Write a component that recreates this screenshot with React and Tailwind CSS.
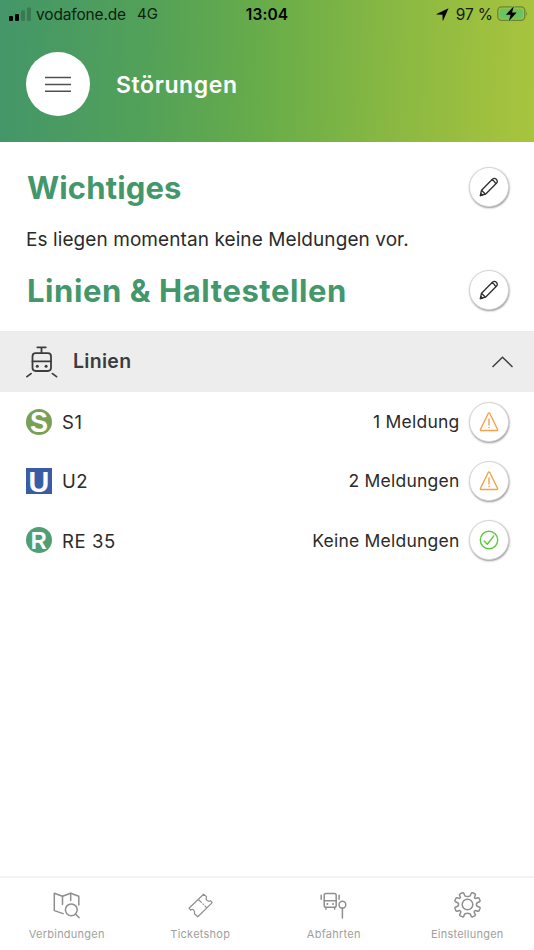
import clsx from 'clsx';

const lines = [
  { id: 's1', name: 'S1', badge: 'S', status: '1 Meldung', ok: false },
  { id: 'u2', name: 'U2', badge: 'U', status: '2 Meldungen', ok: false },
  { id: 're35', name: 'RE 35', badge: 'R', status: 'Keine Meldungen', ok: true },
];

function StatusBar() {
  return (
    <div className="flex h-7 items-center pl-[9px] pr-[6px] text-base text-[#10200f]">
      <div className="flex flex-1 items-center">
        <svg width="23" height="14" viewBox="0 0 23 14">
          <rect x="0" y="9" width="4" height="5" rx="1" fill="#000" />
          <rect x="6" y="7" width="4" height="7" rx="1" fill="#000" />
          <rect x="12" y="3.5" width="4" height="10.5" rx="1" fill="#397b51" />
          <rect x="18" y="0.5" width="4" height="13.5" rx="1" fill="#397b51" />
        </svg>
        <span className="ml-1 pt-px text-[15.5px] tracking-[-0.15px]">vodafone.de</span>
        <span className="ml-[11px] pt-px text-[15px]">4G</span>
      </div>
      <span className="mr-[3px] pt-px text-[15.5px] font-semibold tracking-[0.15px] text-black">13:04</span>
      <div className="flex flex-1 items-center justify-end">
        <svg className="mr-[7px]" width="13" height="13" viewBox="0 0 12 12">
          <path d="M11.6 0.3 L6.6 11.6 Q6.2 11.9 6.1 11.3 L6 6.3 L0.6 6.1 Q0 5.9 0.5 5.5 Z" fill="#000" />
        </svg>
        <span className="pt-px text-[15.5px] tracking-[-0.1px]">97 %</span>
        <svg className="ml-1" width="31" height="17" viewBox="0 0 31 17">
          <rect x="0.8" y="0.9" width="27" height="13.4" rx="3.8" fill="none" stroke="#6b8632" strokeWidth="1.3" />
          <rect x="2.8" y="2.8" width="23" height="9.6" rx="2" fill="#65c566" />
          <path d="M29.3 5.2 Q31 7.5 29.3 10 Z" fill="#6b8632" />
          <path
            d="M16.8 0.2 L8.9 8.7 H13.6 L11.8 15.2 L19.6 6.5 H15 Z"
            fill="#000"
            stroke="#7dbb50"
            strokeWidth="2"
            paintOrder="stroke"
            strokeLinejoin="round"
          />
        </svg>
      </div>
    </div>
  );
}

function RoundButton({ label, children }) {
  return (
    <button
      aria-label={label}
      className="flex size-10 shrink-0 items-center justify-center rounded-full border border-[#d6d6d6] bg-white shadow-[0.5px_1px_2px_rgba(0,0,0,0.42)]"
    >
      {children}
    </button>
  );
}

function PencilIcon() {
  return (
    <svg width="20" height="20" viewBox="0 0 20 20" fill="none" stroke="#2e2e2e" strokeWidth="1.3" strokeLinejoin="round">
      <path d="M1.4 18.5 L2.5 13.2 L13.4 2.2 Q15.3 0.4 17.3 2.3 Q19.2 4.4 17.4 6.3 L6.5 17.2 Z" />
      <path d="M2.5 13.2 L6.5 17.2 M12.8 2.8 Q15 3 16.8 6.8" />
      <path d="M1.4 18.5 L2 16.6 L3.4 18 Z" fill="#2e2e2e" />
    </svg>
  );
}

function WarningIcon() {
  return (
    <svg width="20" height="20" viewBox="0 0 20 20" fill="none" stroke="#f3a24b" strokeWidth="1.4" strokeLinejoin="round">
      <path d="M9.2 1.5 Q10 0.5 10.8 1.5 L18.6 17.5 Q18.8 18.5 17.8 18.5 H2.2 Q1.2 18.5 1.4 17.5 Z" />
      <path d="M10 7 V13" strokeLinecap="round" />
      <circle cx="10" cy="15.5" r="0.8" fill="#f3a24b" stroke="none" />
    </svg>
  );
}

function CheckIcon() {
  return (
    <svg width="20" height="20" viewBox="0 0 20 20" fill="none" stroke="#5bcb3f" strokeWidth="1.4">
      <circle cx="10" cy="10" r="8.7" />
      <path d="M5.1 11 L8.3 14.2 L14.8 5.9" strokeLinecap="round" strokeLinejoin="round" />
    </svg>
  );
}

function TramIcon() {
  return (
    <svg width="32" height="32" viewBox="0 0 32 32" fill="none" stroke="#3c3c3c" strokeWidth="1.8" strokeLinecap="round">
      <path d="M11.3 1.3 H19.8 M15.5 1.3 V7" />
      <rect x="6.5" y="7.2" width="18.5" height="17.8" rx="3.2" />
      <path d="M6.5 15.4 H25 M5 27.6 L1 30.6 M26.5 27.6 L30.5 30.6" />
      <circle cx="11.3" cy="20.2" r="1.5" fill="#3c3c3c" stroke="none" />
      <circle cx="20.1" cy="20.2" r="1.5" fill="#3c3c3c" stroke="none" />
    </svg>
  );
}

function LineBadge({ type }) {
  return (
    <svg
      width="26"
      height="26"
      viewBox="0 0 26 26"
      className="shrink-0 overflow-visible font-['Liberation_Sans',sans-serif] font-bold"
      fill="#fff"
    >
      {type === 'S' && (
        <>
          <circle cx="13" cy="13" r="13" fill="#7a9f56" />
          <text x="4" y="23.2" fontSize="29.5" textLength="18" lengthAdjust="spacingAndGlyphs">S</text>
        </>
      )}
      {type === 'U' && (
        <>
          <rect width="26" height="26" fill="#395da5" />
          <text x="2.6" y="23.5" fontSize="30" textLength="20.8" lengthAdjust="spacingAndGlyphs">U</text>
        </>
      )}
      {type === 'R' && (
        <>
          <circle cx="13" cy="13" r="13" fill="#4f9e74" />
          <text x="4.8" y="21.6" fontSize="24.5" textLength="16" lengthAdjust="spacingAndGlyphs">R</text>
        </>
      )}
    </svg>
  );
}

function SectionTitle({ title, className }) {
  return (
    <div className="flex h-11 items-center justify-between pl-[27px] pr-[25px]">
      <h2 className={clsx('text-[31px] font-bold leading-none text-[#43976b]', className)}>{title}</h2>
      <RoundButton label={`${title} bearbeiten`}>
        <PencilIcon />
      </RoundButton>
    </div>
  );
}

function MapSearchIcon() {
  return (
    <>
      <path d="M10.2 22.6 L1.3 19.6 V2.2 L9.5 5.2 L17.7 2.2 L25.8 5.2 V14" />
      <path d="M9.5 5.2 V13.6 M17.7 2.2 V9.6" />
      <circle cx="18.3" cy="18.8" r="5.9" />
      <path d="M22.5 23 L26 26.6" />
    </>
  );
}

function TicketIcon() {
  return (
    <g strokeWidth="1.2">
      <path d="M16.6 3.2 L2 17.2 L3.7 19 Q5.3 17.8 6.7 19.2 Q8.1 20.7 7.4 22.7 L10.8 25.8 L25.2 11.6 L23.5 9.7 Q21.5 10.8 19.9 9.4 Q18.5 7.6 19.5 5.6 Z" />
      <path d="M11.8 9 L14.4 11.4 M15.8 12.8 L16.4 13.4 M17.8 14.8 L19.6 16.6" />
    </g>
  );
}

function BusStopIcon() {
  return (
    <>
      <rect x="4.2" y="2.6" width="12" height="13.6" rx="1.8" />
      <path d="M4.2 9.8 H16.2 M6 16.5 V18.2 M14.6 16.5 V18.2 M1.2 4.2 V8.2 M19.1 4.2 V8.2" />
      <circle cx="7.4" cy="13" r="1" fill="#8f8f8f" stroke="none" />
      <circle cx="13" cy="13" r="1" fill="#8f8f8f" stroke="none" />
      <circle cx="22.4" cy="13.7" r="3.4" />
      <path d="M22.4 17.2 V27" />
    </>
  );
}

function GearIcon() {
  return (
    <>
      <path d="M10.8 4.8 L9.8 2.3 Q9.5 1.5 8.6 1.8 L6.1 2.9 Q5.2 3.3 5.6 4.2 L6.4 6.4 Q6.2 7.4 5.1 7.4 L3.1 6.7 Q2.3 6.5 1.9 7.3 L1 9.5 Q.7 10.4 1.5 10.8 L4.1 12 Q5 13.5 4.1 15 L1.5 16.2 Q.7 16.6 1 17.5 L1.9 19.7 Q2.3 20.5 3.1 20.3 L5.4 19.5 Q6.8 19.7 6.9 21 L5.7 23.6 Q5.4 24.4 6.2 24.9 L8.4 25.8 Q9.3 26.2 9.7 25.4 L10.8 22.9 Q13.5 21.7 16.2 22.9 L17.3 25.4 Q17.7 26.2 18.6 25.8 L20.8 24.9 Q21.6 24.4 21.3 23.6 L20.1 21 Q20.2 19.7 21.6 19.5 L23.9 20.3 Q24.7 20.5 25.1 19.7 L26 17.5 Q26.3 16.6 25.5 16.2 L22.9 15 Q22 13.5 22.9 12 L25.5 10.8 Q26.3 10.4 26 9.5 L25.1 7.3 Q24.7 6.5 23.9 6.7 L21.6 7.5 Q20.5 7.4 20.4 6.4 L21.3 4.1 Q21.7 3.2 20.8 2.8 L18.5 1.8 Q17.6 1.5 17.3 2.3 L16.2 4.8 Q13.5 6.2 10.8 4.8 Z" />
      <circle cx="13.5" cy="13.5" r="5.3" />
    </>
  );
}

const tabs = [
  { label: 'Verbindungen', icon: MapSearchIcon },
  { label: 'Ticketshop', icon: TicketIcon },
  { label: 'Abfahrten', icon: BusStopIcon },
  { label: 'Einstellungen', icon: GearIcon },
];

function TabBar() {
  return (
    <nav className="grid h-[74px] shrink-0 grid-cols-4 border-t-2 border-[#f3f3f3] bg-white">
      {tabs.map(({ label, icon: Icon }) => (
        <button key={label} className="flex flex-col items-center pt-[13px]">
          <svg width="27" height="28" viewBox="0 0 27 28" fill="none" stroke="#8f8f8f" strokeWidth="1.5" strokeLinecap="round" strokeLinejoin="round">
            <Icon />
          </svg>
          <span className="mt-[7px] text-[11px] leading-4 tracking-[0.25px] text-[#a0a0a0]">{label}</span>
        </button>
      ))}
    </nav>
  );
}

export default function App() {
  return (
    <div className="flex h-[950px] w-[534px] flex-col overflow-hidden bg-white font-['Inter',sans-serif] text-[#2b2b2b]">
      <header className="h-[142px] shrink-0 bg-[linear-gradient(92deg,#439669_0%,#52a159_27%,#69ad49_50%,#8bb942_75%,#a9c43d_100%)]">
        <StatusBar />
        <div className="flex items-center pl-[26px] pt-6">
          <button aria-label="Menü" className="flex size-16 items-center justify-center rounded-full bg-white">
            <svg width="26" height="17" viewBox="0 0 26 17" stroke="#505050" strokeWidth="1.4">
              <path d="M0 1.5 H26 M0 8.5 H26 M0 15.2 H26" />
            </svg>
          </button>
          <h1 className="ml-[26px] pt-0.5 text-[23px] font-semibold tracking-[0.6px] text-white">Störungen</h1>
        </div>
      </header>

      <main className="flex-1 pt-[23px]">
        <SectionTitle title="Wichtiges" className="tracking-[0.15px]" />
        <p className="mt-[17px] pl-[26px] text-[19px] leading-7 tracking-[0.08px]">Es liegen momentan keine Meldungen vor.</p>
        <div className="mt-[14px]">
          <SectionTitle title="Linien & Haltestellen" className="tracking-[0.57px]" />
        </div>

        <div className="mt-[19px] flex h-[61px] items-center bg-[#ededed] pl-[26px] pr-[21px]">
          <TramIcon />
          <h3 className="ml-[15px] flex-1 text-[19.5px] font-semibold tracking-[0.3px] text-[#3c3c3c]">Linien</h3>
          <svg width="21" height="12" viewBox="0 0 21 12" fill="none" stroke="#3c3c3c" strokeWidth="1.4">
            <path d="M0.5 11 L10.5 1.2 L20.5 11" />
          </svg>
        </div>

        <ul>
          {lines.map((line) => (
            <li key={line.id} className="flex h-[59.4px] items-center pl-[26px] pr-[25.5px]">
              <LineBadge type={line.badge} />
              <span className="ml-[10px] flex-1 pt-0.5 text-[18.5px] tracking-[0.6px]">{line.name}</span>
              <span className="mr-[9px] pt-px text-[17.5px] tracking-[0.22px]">{line.status}</span>
              <RoundButton label={line.status}>{line.ok ? <CheckIcon /> : <WarningIcon />}</RoundButton>
            </li>
          ))}
        </ul>
      </main>

      <TabBar />
    </div>
  );
}
